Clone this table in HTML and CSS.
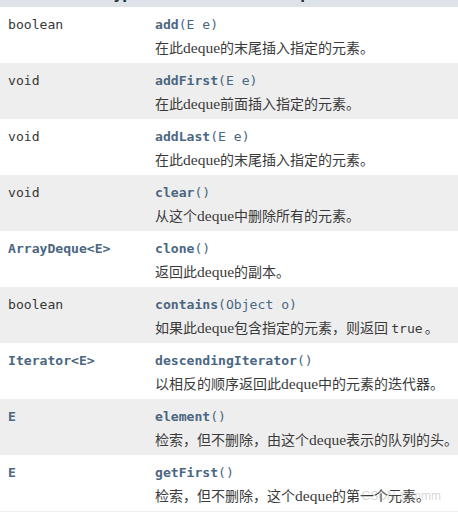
FILE: index.html
```html
<!DOCTYPE html>
<html lang="zh">
<head>
<meta charset="utf-8">
<link rel="stylesheet" href="styles.css">
</head>
<body>
<div class="table">
  <div class="head"><span class="h1">Modifier and Type</span><span class="h2">Method and Description</span></div>
  <div class="row">
    <div class="type">boolean</div>
    <div class="desc"><div class="sig"><b>add</b>(E&nbsp;e)</div><div class="txt">在此<span class="en">deque</span>的末尾插入指定的元素。</div></div>
  </div>
  <div class="row alt">
    <div class="type">void</div>
    <div class="desc"><div class="sig"><b>addFirst</b>(E&nbsp;e)</div><div class="txt">在此<span class="en">deque</span>前面插入指定的元素。</div></div>
  </div>
  <div class="row">
    <div class="type">void</div>
    <div class="desc"><div class="sig"><b>addLast</b>(E&nbsp;e)</div><div class="txt">在此<span class="en">deque</span>的末尾插入指定的元素。</div></div>
  </div>
  <div class="row alt">
    <div class="type">void</div>
    <div class="desc"><div class="sig"><b>clear</b>()</div><div class="txt">从这个<span class="en">deque</span>中删除所有的元素。</div></div>
  </div>
  <div class="row">
    <div class="type link">ArrayDeque&lt;E&gt;</div>
    <div class="desc"><div class="sig"><b>clone</b>()</div><div class="txt">返回此<span class="en">deque</span>的副本。</div></div>
  </div>
  <div class="row alt">
    <div class="type">boolean</div>
    <div class="desc"><div class="sig"><b>contains</b>(Object&nbsp;o)</div><div class="txt">如果此<span class="en">deque</span>包含指定的元素，则返回 <code>true</code>。</div></div>
  </div>
  <div class="row">
    <div class="type link">Iterator&lt;E&gt;</div>
    <div class="desc"><div class="sig"><b>descendingIterator</b>()</div><div class="txt">以相反的顺序返回此<span class="en">deque</span>中的元素的迭代器。</div></div>
  </div>
  <div class="row alt">
    <div class="type link">E</div>
    <div class="desc"><div class="sig"><b>element</b>()</div><div class="txt">检索，但不删除，由这个<span class="en">deque</span>表示的队列的头。</div></div>
  </div>
  <div class="row last">
    <div class="type link">E</div>
    <div class="desc"><div class="sig"><b>getFirst</b>()</div><div class="txt">检索，但不删除，这个<span class="en">deque</span>的第一个元素。</div></div>
    <span class="wm">CSDN @mmm</span>
  </div>
</div>
</body>
</html>
```
FILE: styles.css
```css
html, body {
  margin: 0;
  padding: 0;
  background: #ffffff;
}
.table {
  width: 458px;
  display: flex;
  flex-direction: column;
}
.head {
  height: 7px;
  overflow: hidden;
  background: #dee3e9;
  display: flex;
  font-family: "DejaVu Sans", sans-serif;
  font-weight: bold;
  font-size: 14px;
  line-height: 14px;
  color: #253441;
}
.head span {
  display: block;
  margin-top: -13px;
}
.h1 {
  margin-left: 1px;
  width: 151px;
}
.row {
  height: 56px;
  box-sizing: border-box;
  display: flex;
  background: #ffffff;
  padding-top: 8px;
  position: relative;
}
.row.alt {
  background: #eeeeee;
}
.row.last {
  border-bottom: 1px solid #eeeeee;
  height: 57px;
}
.type {
  width: 155px;
  padding-left: 8px;
  box-sizing: border-box;
  flex: none;
  font-family: "DejaVu Sans Mono", monospace;
  font-size: 13.1px;
  line-height: 20px;
  color: #353833;
}
.type.link {
  color: #4a6782;
  font-weight: bold;
}
.desc {
  flex: 1;
  display: flex;
  flex-direction: column;
}
.sig {
  font-family: "DejaVu Sans Mono", monospace;
  font-size: 13.1px;
  line-height: 20px;
  color: #4a6782;
  white-space: nowrap;
}
.sig b {
  font-weight: bold;
}
.txt {
  margin-top: 2px;
  font-family: "Noto Sans CJK SC", sans-serif;
  font-size: 14px;
  line-height: 20px;
  color: #3a3a3a;
  white-space: nowrap;
}
.en {
  font-family: "Liberation Serif", serif;
  font-size: 15.5px;
}
.txt code {
  font-family: "DejaVu Sans Mono", monospace;
  font-size: 13.1px;
  margin-right: 2px;
}
.wm {
  position: absolute;
  right: 17px;
  bottom: 8px;
  font-family: "Liberation Sans", sans-serif;
  font-size: 12px;
  color: rgba(160, 160, 160, 0.45);
}
```
